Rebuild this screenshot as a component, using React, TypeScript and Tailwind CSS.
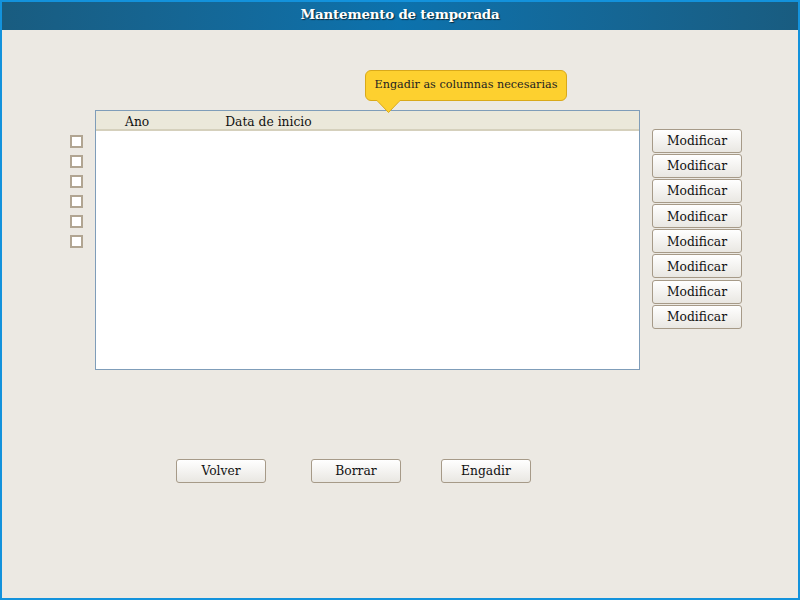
const serif = "font-['DejaVu_Serif','Liberation_Serif',serif]";

const checks = [0, 1, 2, 3, 4, 5];
const rows = [0, 1, 2, 3, 4, 5, 6, 7];

function Btn({ label, className = '' }: { label: string; className?: string }) {
  return (
    <button
      className={`flex h-[24px] w-[90px] items-center justify-center rounded-[3px] border border-[#a69a88] bg-gradient-to-b from-white to-[#e9e7e2] pt-[1px] text-[12.3px] text-[#111] ${serif} ${className}`}
    >
      {label}
    </button>
  );
}

export default function App() {
  return (
    <div className="flex h-[600px] w-[800px] flex-col border-2 border-[#1392dc] bg-[#ece9e3]">
      {/* Title bar */}
      <div className="flex h-[28px] shrink-0 items-center justify-center bg-gradient-to-r from-[#195c80] via-[#0c72ad] to-[#195c80] pb-[3px]">
        <span className="font-['DejaVu_Serif',serif] text-[13.4px] font-bold tracking-[-0.2px] text-white [text-shadow:1px_1px_1px_#0b2a3c]">
          Mantemento de temporada
        </span>
      </div>

      <div className="flex flex-1 flex-col pt-[40px]">
        {/* Tooltip */}
        <div className="relative ml-[363px] flex h-[31px] w-[202px] items-center justify-center rounded-[6px] border border-[#d9a91a] bg-[#fdd02f]">
          <span className={`text-[11.2px] text-[#222] ${serif}`}>Engadir as columnas necesarias</span>
          <svg className="absolute left-[10px] top-[29px]" width="26" height="14" viewBox="0 0 26 14">
            <path d="M0.5 0 L12.5 12.5 L24.5 0" fill="#fdd02f" stroke="#d9a91a" strokeWidth="1" />
            <rect x="1.5" y="0" width="22" height="1.5" fill="#fdd02f" />
          </svg>
        </div>

        {/* Main row */}
        <div className="mt-[9px] flex">
          <div className="ml-[68px] flex flex-col gap-[7px] pt-[25px]">
            {checks.map((i) => (
              <span key={i} className="block h-[13px] w-[13px] border-2 border-[#b1a592] bg-white" />
            ))}
          </div>

          <div className="ml-[12px] h-[260px] w-[545px] border border-[#7f9db9] bg-white">
            <div
              className={`flex h-[20px] items-center border-b-2 border-[#d5d0bc] bg-[#ebe8da] pt-[5px] text-[12.3px] text-[#111] ${serif}`}
            >
              <span className="ml-[29px]">Ano</span>
              <span className="ml-[76px]">Data de inicio</span>
            </div>
          </div>

          <div className="ml-[12px] flex flex-col gap-[1.1px] pt-[19px]">
            {rows.map((i) => (
              <Btn key={i} label="Modificar" />
            ))}
          </div>
        </div>

        {/* Bottom buttons */}
        <div className="mt-[89px] flex">
          <Btn label="Volver" className="ml-[174px]" />
          <Btn label="Borrar" className="ml-[45px]" />
          <Btn label="Engadir" className="ml-[40px]" />
        </div>
      </div>
    </div>
  );
}
